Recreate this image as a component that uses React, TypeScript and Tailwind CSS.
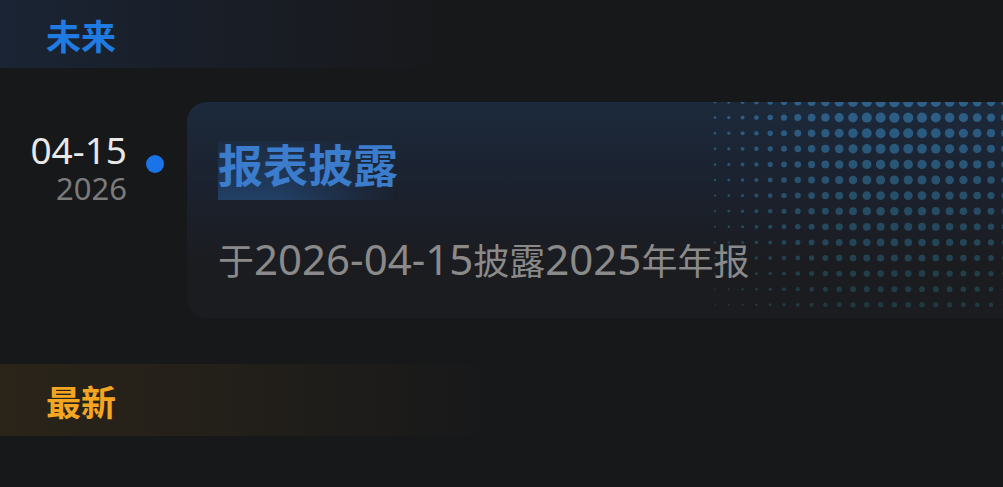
import React from "react"

const CJK = "font-['Noto_Sans_CJK_SC','Noto_Sans',sans-serif]"
const LATIN = "font-['Noto_Sans','Noto_Sans_CJK_SC',sans-serif]"

// halftone dots in the top-right corner of the card
function DotPattern() {
  const dots: React.ReactNode[] = []
  for (let j = 0; j < 14; j++) {
    const y = j * 15.6
    const v = Math.max(0, 1 - Math.pow(y / 240, 1.5))
    for (let i = 0; i < 24; i++) {
      const x = 528 + i * 13.8
      const dx = x - 707
      const s = dx < 0 ? 110 : 150
      const h = Math.exp(-(dx * dx) / (2 * s * s))
      const r = 5.2 * h * (0.4 + 0.6 * v)
      if (r < 0.6) continue
      const t = y / 210
      const c = `rgb(${Math.round(46 - 12 * t)},${Math.round(96 - 24 * t)},${Math.round(138 - 56 * t)})`
      dots.push(<circle key={`${i}-${j}`} cx={x} cy={y} r={r} fill={c} opacity={0.55 + 0.45 * v} />)
    }
  }
  return (
    <svg className="absolute inset-0 w-full h-full pointer-events-none" aria-hidden>
      {dots}
    </svg>
  )
}

export default function App() {
  return (
    <div className={`w-full h-[487px] overflow-hidden bg-[#17181a] ${CJK}`}>
      {/* section: future */}
      <div className="h-[68px] flex items-center pl-[46px] bg-[linear-gradient(90deg,#1a2434_0%,#191d25_25%,#17181a_45%)]">
        <span className="text-[35px] leading-none font-bold text-[#1f7be2]">未来</span>
      </div>

      {/* timeline item */}
      <div className="flex items-start mt-[34px]">
        <div className={`w-[127px] shrink-0 flex flex-col items-end mt-[28px] ${LATIN}`}>
          <span className="text-[37px] leading-[40px] text-[#e8e8e8]">04-15</span>
          <span className="text-[31px] leading-[34px] text-[#7b7b7b] mt-[1px]">2026</span>
        </div>
        <div className="shrink-0 w-[18px] h-[18px] rounded-full bg-[#1a73e8] ml-[19px] mt-[53px]" />
        <div className="relative flex-1 ml-[23px] mr-[-24px] h-[216px] rounded-[20px] overflow-hidden bg-[linear-gradient(180deg,#1c2a3b_0%,#1b2230_35%,#1b1c20_75%,#1b1c1f_100%)]">
          <DotPattern />
          <div className="relative pl-[31px] pt-[39px]">
            <div className="relative inline-block pb-[12px]">
              <div className="absolute inset-0 bg-[linear-gradient(180deg,rgba(40,90,150,0.12)_0%,rgba(40,90,150,0.55)_100%)] [mask-image:linear-gradient(90deg,#000_35%,transparent_100%)]" />
              <span className="relative text-[45px] leading-none font-bold text-[#3b7ccd]">报表披露</span>
            </div>
            <div className="mt-[38px] h-[42px] flex items-baseline text-[36px] leading-[42px] text-[#8a8a8a] whitespace-nowrap">
              <span>于</span>
              <span className={`${LATIN} text-[42px]`}>2026-04-15</span>
              <span>披露</span>
              <span className={`${LATIN} text-[42px]`}>2025</span>
              <span>年年报</span>
            </div>
          </div>
        </div>
      </div>

      {/* section: latest */}
      <div className="h-[72px] mt-[46px] flex items-center pl-[46px] bg-[linear-gradient(90deg,#2a2419_0%,#221f1a_25%,#17181a_50%)]">
        <span className="text-[35px] leading-none font-bold text-[#f4a623]">最新</span>
      </div>
    </div>
  )
}
